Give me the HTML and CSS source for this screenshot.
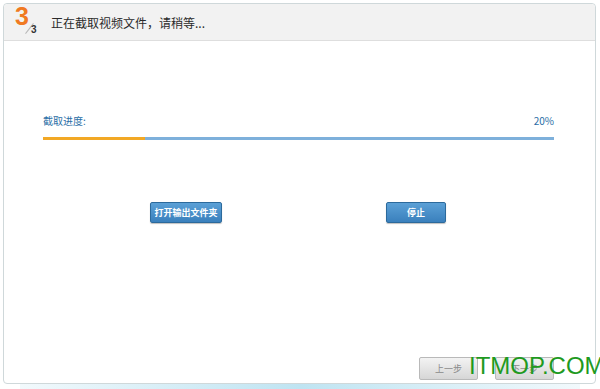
FILE: index.html
```html
<!DOCTYPE html>
<html lang="zh-CN">
<head>
    <meta charset="UTF-8">
    <title>截取视频</title>
    <link rel="stylesheet" href="styles.css">
</head>
<body>

<div class="window">
    <div class="header">
        <div class="step">
            <span class="step-num">3</span>
            <span class="step-slash"></span>
            <span class="step-total">3</span>
        </div>
        <div class="title">正在截取视频文件，请稍等...</div>
    </div>

    <div class="content">
        <div class="progress-info">
            <span>截取进度:</span>
            <span>20%</span>
        </div>
        <div class="progress">
            <div class="progress-done" style="width: 20%"></div>
        </div>

        <div class="actions">
            <button class="btn-blue btn-open">打开输出文件夹</button>
            <button class="btn-blue btn-stop">停止</button>
        </div>
    </div>

    <div class="footer">
        <button class="btn-gray">上一步</button>
        <button class="btn-gray">下一步</button>
        <span class="watermark">ITMOP.COM</span>
    </div>
</div>
<div class="glow"></div>

</body>
</html>
```

FILE: styles.css
```css
body {
    margin: 0;
    background-color: #ffffff;
    font-family: "Noto Sans CJK SC", "Liberation Sans", sans-serif;
    width: 600px;
    height: 389px;
    overflow: hidden;
}
.window {
    position: relative;
    margin: 3px 4px 0 3px;
    height: 379px;
    border: 1px solid #cfd8da;
    border-radius: 4px;
    background-color: #ffffff;
    display: flex;
    flex-direction: column;
}
.header {
    height: 36px;
    background-color: #f2f2f2;
    border-bottom: 1px solid #dedede;
    border-radius: 4px 4px 0 0;
    display: flex;
    align-items: center;
    flex-shrink: 0;
}
.step {
    position: relative;
    width: 47px;
    height: 36px;
}
.step-num {
    position: absolute;
    left: 11px;
    top: -2px;
    font-family: "Liberation Sans", sans-serif;
    font-weight: bold;
    font-size: 25px;
    color: #f07a22;
}
.step-slash {
    position: absolute;
    left: 25px;
    top: 18px;
    width: 1px;
    height: 13px;
    background-color: #b8b8b8;
    transform: rotate(38deg);
}
.step-total {
    position: absolute;
    left: 27px;
    top: 20px;
    font-family: "Liberation Sans", sans-serif;
    font-weight: bold;
    font-size: 10px;
    color: #333333;
}
.title {
    font-size: 12px;
    color: #2a2a2a;
    padding-top: 1px;
}
.content {
    flex: 1;
    padding: 73px 41px 0 39px;
}
.progress-info {
    display: flex;
    justify-content: space-between;
    font-size: 10px;
    color: #2a6ea6;
    line-height: 14px;
}
.progress {
    margin-top: 9px;
    height: 3px;
    background-color: #7eb0db;
}
.progress-done {
    height: 100%;
    background-color: #f2a825;
}
.actions {
    display: flex;
    margin-top: 62px;
    padding-left: 107px;
}
.btn-blue {
    height: 21px;
    border: 1px solid #2c6a9c;
    border-radius: 2px;
    background: linear-gradient(#5ba0d6, #3a80bd);
    color: #ffffff;
    font-family: "Noto Sans CJK SC", sans-serif;
    font-size: 9px;
    font-weight: bold;
    padding: 0;
    box-shadow: 0 1px 1px rgba(0,0,0,0.25);
}
.btn-open {
    width: 72px;
}
.btn-stop {
    width: 60px;
    margin-left: 164px;
}
.footer {
    position: relative;
    display: flex;
    justify-content: flex-end;
    gap: 17px;
    padding: 0 41px 3px 0;
}
.btn-gray {
    width: 59px;
    height: 23px;
    border: 1px solid #b9b9b9;
    border-radius: 2px;
    background: linear-gradient(#f3f3f3, #d6d6d6);
    color: #8a8a8a;
    font-family: "Noto Sans CJK SC", sans-serif;
    font-size: 9px;
    padding: 0;
}
.watermark {
    position: absolute;
    left: 465px;
    top: -5px;
    font-family: "Liberation Sans", sans-serif;
    font-size: 24px;
    color: #1f9a1f;
}
.glow {
    height: 6px;
    margin: 0 20px;
    background: linear-gradient(90deg, rgba(190,225,240,0.2), #bfe4f2, rgba(190,225,240,0.2));
}
```
